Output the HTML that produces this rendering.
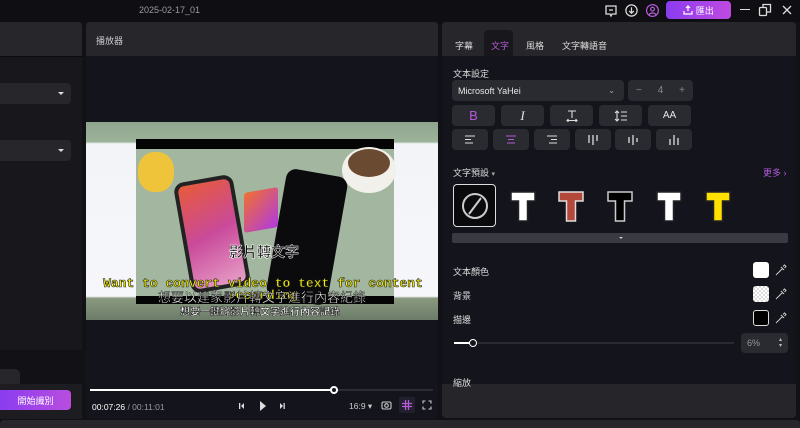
<!DOCTYPE html>
<html><head><meta charset="utf-8"><style>
*{margin:0;padding:0;box-sizing:border-box}
body{width:800px;height:428px;overflow:hidden;background:#111116;font-family:"Liberation Sans","Noto Sans CJK TC",sans-serif;color:#d8d8dc;font-size:9px;position:relative}
.a{position:absolute}
.btn{position:absolute;background:#2a2b31;border-radius:4px;display:flex;align-items:center;justify-content:center;color:#e6e6e6}
</style></head><body>
<div class="a" style="left:0;top:0;width:800px;height:22px;background:#0f0f13"></div>
<div class="a" style="left:139px;top:5px;color:#9a9aa0;font-size:9px">2025-02-17_01</div>
<svg class="a" style="left:603px;top:3px" width="16" height="16" viewBox="0 0 16 16" fill="none" stroke="#ddd" stroke-width="1.3"><path d="M3 3h10v8H9l-1 2-1-2H3z"/><path d="M6 7h4"/></svg>
<svg class="a" style="left:624px;top:3px" width="15" height="15" viewBox="0 0 16 16" fill="none" stroke="#ddd" stroke-width="1.3"><circle cx="8" cy="8" r="6"/><path d="M8 4.5v6M5.5 8.5L8 11l2.5-2.5"/></svg>
<svg class="a" style="left:645px;top:3px" width="15" height="15" viewBox="0 0 16 16" fill="none" stroke="#b45ad8" stroke-width="1.3"><circle cx="8" cy="8" r="6.3"/><circle cx="8" cy="6.5" r="2"/><path d="M4.3 12.5c1.5-2.5 5.9-2.5 7.4 0"/></svg>
<div class="a" style="left:666px;top:1px;width:65px;height:18px;border-radius:4px;background:linear-gradient(90deg,#8a3cf0,#c04ae0);display:flex;align-items:center;justify-content:center;color:#fff;font-size:9px"><svg width="10" height="10" viewBox="0 0 10 10" fill="none" stroke="#fff" stroke-width="1.2"><path d="M5 6V1M3 3l2-2 2 2M1 6v3h8V6"/></svg>&nbsp;匯出</div>
<div class="a" style="left:740px;top:9px;width:10px;height:1.3px;background:#ddd"></div>
<svg class="a" style="left:758px;top:3px" width="14" height="14" viewBox="0 0 14 14" fill="none" stroke="#ddd" stroke-width="1.3"><rect x="1.5" y="4.5" width="7" height="8" rx="1"/><path d="M5 4V1.5h7.5V9H9"/></svg>
<svg class="a" style="left:782px;top:5px" width="10" height="10" viewBox="0 0 10 10" stroke="#ddd" stroke-width="1.3"><path d="M1 1l8 8M9 1L1 9"/></svg>

<div class="a" style="left:0;top:22px;width:82px;height:34px;background:#26262b;border-radius:0 4px 0 0"></div>
<div class="a" style="left:0;top:56px;width:82px;height:294px;background:#17171c;border-top:1px solid #0c0c0e"></div>
<div class="a" style="left:0;top:83px;width:71px;height:21px;background:#26262b;border-radius:0 4px 4px 0"></div>
<div class="a" style="left:0;top:140px;width:71px;height:21px;background:#26262b;border-radius:0 4px 4px 0"></div>
<div class="a" style="left:58px;top:92px;border:3px solid transparent;border-top:3px solid #ddd"></div>
<div class="a" style="left:58px;top:149px;border:3px solid transparent;border-top:3px solid #ddd"></div>
<div class="a" style="left:0;top:369px;width:20px;height:16px;background:#26262b;border-radius:0 5px 0 0"></div>
<div class="a" style="left:0;top:384px;width:82px;height:35px;background:#1c1c21"></div>
<div class="a" style="left:0;top:390px;width:71px;height:20px;border-radius:0 4px 4px 0;background:linear-gradient(90deg,#8a3cf0,#b84ee0);color:#fff;display:flex;align-items:center;justify-content:center;font-size:9px">開始識別</div>

<div class="a" style="left:86px;top:22px;width:352px;height:34px;background:#26262b;border-radius:4px 4px 0 0"></div>
<div class="a" style="left:96px;top:34px;font-size:9px;color:#ccc">播放器</div>
<div class="a" style="left:86px;top:56px;width:352px;height:363px;background:#14151c;border-radius:0 0 4px 4px"></div>
<div class="a" style="left:86px;top:122px;width:352px;height:198px;background:linear-gradient(180deg,#8fa58d 0,#9cb39a 10%,#f2f4f8 11%,#f6f7fa 88%,#8a9a80 89%,#6b7b68 100%);overflow:hidden">
  <div class="a" style="left:50px;top:17px;width:258px;height:10px;background:#050505"></div>
  <div class="a" style="left:50px;top:27px;width:258px;height:155px;background:#a3b7a0"></div>
  <div class="a" style="left:50px;top:174px;width:258px;height:8px;background:#050505"></div>
  <div class="a" style="left:52px;top:30px;width:36px;height:40px;background:#f0c43a;border-radius:45%"></div>
  <div class="a" style="left:256px;top:25px;width:54px;height:46px;background:#f2f0ea;border-radius:50%"></div>
  <div class="a" style="left:262px;top:27px;width:42px;height:28px;background:#6a4a30;border-radius:50%"></div>
  <div class="a" style="left:96px;top:56px;width:60px;height:112px;background:linear-gradient(160deg,#e85a3a,#c94a9a 50%,#e8a0c8);border:4px solid #222;border-radius:10px;transform:rotate(-10deg)"></div>
  <div class="a" style="left:190px;top:50px;width:62px;height:130px;background:#0b0b0d;border-radius:10px;transform:rotate(10deg)"></div>
  <div class="a" style="left:158px;top:68px;width:34px;height:40px;background:linear-gradient(135deg,#f07030,#b03ae0);border-radius:3px;transform:skewY(-10deg)"></div>
  <div class="a" style="left:143px;top:120px;font-size:14px;color:#111;font-weight:bold;-webkit-text-stroke:.5px #fff">影片轉文字</div>
  <div class="a" style="left:12px;top:156px;width:330px;text-align:center;font-family:'Liberation Mono',monospace;font-weight:bold;font-size:13px;line-height:12px;color:#f4f000;-webkit-text-stroke:.6px #222">Want to convert video to text for content<br>recording</div>
  <div class="a" style="left:72px;top:165px;font-size:13px;color:#fff;-webkit-text-stroke:.4px #000">想要以建家影片轉文字進行內容紀錄</div>
  <div class="a" style="left:94px;top:181px;font-size:10px;color:#fff;font-weight:bold;-webkit-text-stroke:.4px #000">想要一鍵將影片轉文字進行內容記錄</div>
</div>
<div class="a" style="left:90px;top:389px;width:343px;height:2px;background:#2c2d34"></div>
<div class="a" style="left:90px;top:389px;width:244px;height:2px;background:#fff"></div>
<div class="a" style="left:330px;top:386px;width:8px;height:8px;border-radius:50%;background:#14151c;border:2px solid #fff"></div>
<div class="a" style="left:92px;top:402px;font-size:8.5px;color:#fff">00:07:26 <span style="color:#9a9aa0">/ 00:11:01</span></div>
<svg class="a" style="left:238px;top:401px" width="50" height="10" viewBox="0 0 50 10" fill="#ddd"><rect x="1" y="2" width="1.3" height="6"/><path d="M6 2v6L3 5z"/><path d="M22 0v10l6-5z"/><path d="M42 2v6l3-3z"/><rect x="45.5" y="2" width="1.3" height="6"/></svg>
<div class="a" style="left:349px;top:401px;font-size:8.5px;color:#ccc">16:9 ▾</div>
<svg class="a" style="left:381px;top:400px" width="11" height="10" viewBox="0 0 11 10" fill="none" stroke="#ccc" stroke-width="1.1"><rect x="1" y="2" width="9" height="7" rx="1.5"/><circle cx="5.5" cy="5.5" r="1.8"/></svg>
<div class="a" style="left:399px;top:397px;width:16px;height:16px;background:#22202e;border-radius:2px"></div>
<svg class="a" style="left:402px;top:400px" width="10" height="10" viewBox="0 0 10 10" stroke="#b45ad8" stroke-width="1.3"><path d="M3.5 0v10M6.5 0v10M0 3.5h10M0 6.5h10"/></svg>
<svg class="a" style="left:422px;top:400px" width="10" height="10" viewBox="0 0 10 10" fill="none" stroke="#ccc" stroke-width="1.1"><path d="M1 3.5V1h2.5M6.5 1H9v2.5M9 6.5V9H6.5M3.5 9H1V6.5"/></svg>

<div class="a" style="left:442px;top:22px;width:354px;height:34px;background:#26262b;border-radius:4px 4px 0 0"></div>
<div class="a" style="left:484px;top:30px;width:29px;height:26px;background:#17171c;border-radius:4px 4px 0 0"></div>
<div class="a" style="left:455px;top:39px;font-size:9px;color:#ddd">字幕</div>
<div class="a" style="left:491px;top:39px;font-size:9px;color:#b45ad8">文字</div>
<div class="a" style="left:526px;top:39px;font-size:9px;color:#ddd">風格</div>
<div class="a" style="left:562px;top:39px;font-size:9px;color:#ddd">文字轉語音</div>
<div class="a" style="left:442px;top:56px;width:354px;height:362px;background:#14151c;border-radius:0 0 4px 4px"></div>
<div class="a" style="left:442px;top:384px;width:354px;height:34px;background:#25252a;border-radius:0 0 4px 4px"></div>
<div class="a" style="left:453px;top:67px;font-size:9px;color:#ddd">文本設定</div>
<div class="btn" style="left:452px;top:80px;width:172px;height:21px;justify-content:space-between;padding:0 9px 0 6px;font-size:9px"><span>Microsoft YaHei</span><span style="font-size:8px;color:#aaa">⌄</span></div>
<div class="btn" style="left:628px;top:80px;width:65px;height:21px;justify-content:space-around;color:#888;font-size:10px"><span>−</span><span>4</span><span>+</span></div>
<div class="btn" style="left:452px;top:105px;width:43px;height:21px;color:#b45ad8;font-size:13px">B</div>
<div class="btn" style="left:501px;top:105px;width:43px;height:21px;font-size:13px;font-family:'Liberation Serif',serif;font-style:italic">I</div>
<div class="btn" style="left:550px;top:105px;width:43px;height:21px"><svg width="12" height="12" viewBox="0 0 12 12" fill="none" stroke="#ddd" stroke-width="1.1"><path d="M2 1h8M6 1v7M1 10.5h10M2.5 9l-1.5 1.5 1.5 1.5M9.5 9l1.5 1.5-1.5 1.5"/></svg></div>
<div class="btn" style="left:599px;top:105px;width:43px;height:21px"><svg width="14" height="12" viewBox="0 0 14 12" fill="none" stroke="#ddd" stroke-width="1.1"><path d="M3 1v10M1 3l2-2 2 2M1 9l2 2 2-2M7 2h6M7 6h6M7 10h6"/></svg></div>
<div class="btn" style="left:648px;top:105px;width:43px;height:21px;font-size:10px">AA</div>
<div class="btn" style="left:452px;top:129px;width:36px;height:21px"><svg width="10" height="9" stroke="#ddd" stroke-width="1.1"><path d="M0 1h10M0 4.5h6M0 8h8"/></svg></div>
<div class="btn" style="left:493px;top:129px;width:36px;height:21px"><svg width="10" height="9" stroke="#b45ad8" stroke-width="1.1"><path d="M0 1h10M2 4.5h6M1 8h8"/></svg></div>
<div class="btn" style="left:534px;top:129px;width:36px;height:21px"><svg width="10" height="9" stroke="#ddd" stroke-width="1.1"><path d="M0 1h10M4 4.5h6M2 8h8"/></svg></div>
<div class="btn" style="left:575px;top:129px;width:36px;height:21px"><svg width="10" height="10" stroke="#ddd" stroke-width="1.3"><path d="M1 0v8M5 0v10M9 0v6"/></svg></div>
<div class="btn" style="left:615px;top:129px;width:36px;height:21px"><svg width="10" height="10" stroke="#ddd" stroke-width="1.3"><path d="M1 2v6M5 0v10M9 3v4"/></svg></div>
<div class="btn" style="left:656px;top:129px;width:36px;height:21px"><svg width="10" height="10" stroke="#ddd" stroke-width="1.3"><path d="M1 4v6M5 0v10M9 3v7"/></svg></div>
<div class="a" style="left:453px;top:166px;font-size:9px;color:#ddd">文字預設 <span style="font-size:7px;color:#aaa">▾</span></div>
<div class="a" style="left:763px;top:166px;font-size:9px;color:#b45ad8">更多 ›</div>
<div class="a" style="left:453px;top:184px;width:43px;height:43px;border:1.5px solid #ddd;border-radius:4px;background:#0a0a0c;display:flex;align-items:center;justify-content:center"><svg width="30" height="30" viewBox="0 0 30 30" fill="none" stroke="#ccc" stroke-width="2"><circle cx="15" cy="15" r="12"/><path d="M21 7L9 23"/></svg></div>
<svg class="a" style="left:509px;top:190px" width="28" height="33" viewBox="0 0 28 33"><path d="M2 2h24v9h-7.5v20h-9V11H2z" fill="#fff" stroke="#222" stroke-width="1.5"/></svg>
<svg class="a" style="left:557px;top:190px" width="28" height="33" viewBox="0 0 28 33"><path d="M2 2h24v9h-7.5v20h-9V11H2z" fill="#b4483a" stroke="#ddd" stroke-width="1.5"/></svg>
<svg class="a" style="left:606px;top:190px" width="28" height="33" viewBox="0 0 28 33"><path d="M2 2h24v9h-7.5v20h-9V11H2z" fill="#000" stroke="#ccc" stroke-width="1.5"/></svg>
<svg class="a" style="left:655px;top:190px" width="28" height="33" viewBox="0 0 28 33"><path d="M2 2h24v9h-7.5v20h-9V11H2z" fill="#fff" stroke="#222" stroke-width="1.5"/></svg>
<svg class="a" style="left:704px;top:190px" width="28" height="33" viewBox="0 0 28 33"><path d="M2 2h24v9h-7.5v20h-9V11H2z" fill="#ffe000" stroke="#222" stroke-width="1.5"/></svg>
<div class="a" style="left:452px;top:233px;width:336px;height:10px;background:#3a3b42;border-radius:2px"></div>
<div class="a" style="left:619px;top:237px;border:2.5px solid transparent;border-top:2.5px solid #ccc"></div>
<div class="a" style="left:453px;top:265px;font-size:9px;color:#ddd">文本顏色</div>
<div class="a" style="left:453px;top:289px;font-size:9px;color:#ddd">背景</div>
<div class="a" style="left:453px;top:313px;font-size:9px;color:#ddd">描邊</div>
<div class="a" style="left:753px;top:262px;width:16px;height:16px;background:#fff;border-radius:3px"></div>
<div class="a" style="left:753px;top:286px;width:16px;height:16px;background:repeating-conic-gradient(#ddd 0 25%,#fff 0 50%) 0 0/4px 4px;border-radius:3px"></div>
<div class="a" style="left:753px;top:310px;width:16px;height:16px;background:#000;border:1.5px solid #ddd;border-radius:3px"></div>
<svg class="a" style="left:775px;top:264px" width="12" height="12" viewBox="0 0 12 12" fill="none" stroke="#ccc" stroke-width="1"><path d="M2 10l5-5M6 3l3 3M8 2.5l1.5-1.5 1.5 1.5L9.5 4"/><path d="M2 10l-1 1"/></svg>
<svg class="a" style="left:775px;top:288px" width="12" height="12" viewBox="0 0 12 12" fill="none" stroke="#ccc" stroke-width="1"><path d="M2 10l5-5M6 3l3 3M8 2.5l1.5-1.5 1.5 1.5L9.5 4"/><path d="M2 10l-1 1"/></svg>
<svg class="a" style="left:775px;top:312px" width="12" height="12" viewBox="0 0 12 12" fill="none" stroke="#ccc" stroke-width="1"><path d="M2 10l5-5M6 3l3 3M8 2.5l1.5-1.5 1.5 1.5L9.5 4"/><path d="M2 10l-1 1"/></svg>
<div class="a" style="left:454px;top:342px;width:280px;height:2px;background:#2a2b31"></div>
<div class="a" style="left:454px;top:342px;width:18px;height:2px;background:#fff"></div>
<div class="a" style="left:469px;top:339px;width:8px;height:8px;border-radius:50%;background:#14151c;border:1.5px solid #fff"></div>
<div class="btn" style="left:741px;top:333px;width:47px;height:20px;justify-content:space-between;padding:0 6px;color:#999;font-size:9px"><span>6%</span><span style="font-size:6px;line-height:6px;color:#bbb">▴<br>▾</span></div>
<div class="a" style="left:453px;top:376px;font-size:9px;color:#ddd">縮放</div>
<div class="a" style="left:0;top:420px;width:800px;height:8px;background:#26262b;border-radius:4px 4px 0 0"></div>
</body></html>
